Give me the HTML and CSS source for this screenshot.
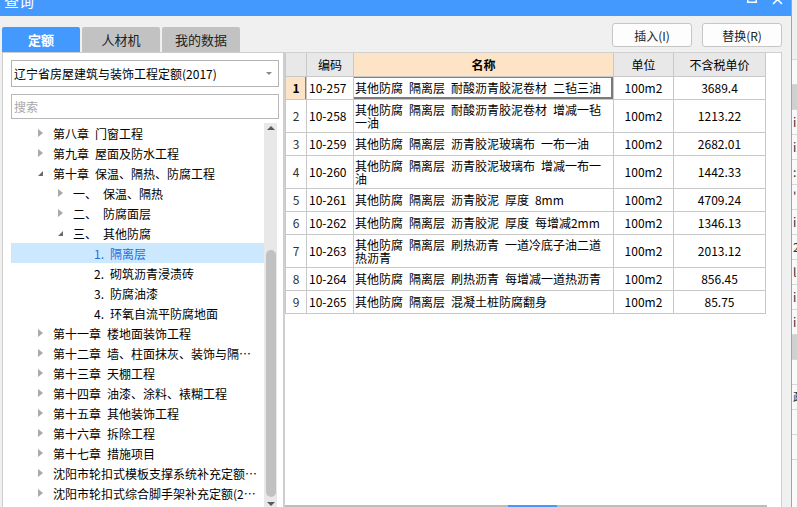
FILE: index.html
```html
<!DOCTYPE html>
<html lang="zh-CN">
<head>
<meta charset="utf-8">
<title>查询</title>
<link rel="stylesheet" href="styles.css">
</head>
<body>
<div class="app">
  <div class="dialog">
    <div class="titlebar">
      <span class="title">查询</span>
      <div class="winctl">
        <svg class="ico-restore" width="10" height="10" viewBox="0 0 10 10"><rect x="0.75" y="0.75" width="8.5" height="8.5" fill="none" stroke="#fff" stroke-width="1.5"/></svg>
        <svg class="ico-close" width="11" height="11" viewBox="0 0 11 11"><path d="M1 1 L10 10 M10 1 L1 10" stroke="#fff" stroke-width="1.6" fill="none"/></svg>
      </div>
    </div>
    <div class="toolbar">
      <div class="tabs">
        <div class="tab active">定额</div>
        <div class="tab">人材机</div>
        <div class="tab">我的数据</div>
      </div>
      <div class="buttons">
        <button class="btn">插入(I)</button>
        <button class="btn">替换(R)</button>
      </div>
    </div>
    <div class="main">
      <div class="lpanel">
        <div class="combo"><span class="combo-text">辽宁省房屋建筑与装饰工程定额(2017)</span><span class="caret"></span></div>
        <div class="search">搜索</div>
        <div class="treewrap">
          <ul class="tree">
            <li class="l1"><span class="arw closed"></span><span class="lbl">第八章 门窗工程</span></li>
            <li class="l1"><span class="arw closed"></span><span class="lbl">第九章 屋面及防水工程</span></li>
            <li class="l1"><span class="arw open"></span><span class="lbl">第十章 保温、隔热、防腐工程</span></li>
            <li class="l2"><span class="arw closed"></span><span class="lbl">一、 保温、隔热</span></li>
            <li class="l2"><span class="arw closed"></span><span class="lbl">二、 防腐面层</span></li>
            <li class="l2"><span class="arw open"></span><span class="lbl">三、 其他防腐</span></li>
            <li class="l3 sel"><span class="arw"></span><span class="lbl">1. 隔离层</span></li>
            <li class="l3"><span class="arw"></span><span class="lbl">2. 砌筑沥青浸渍砖</span></li>
            <li class="l3"><span class="arw"></span><span class="lbl">3. 防腐油漆</span></li>
            <li class="l3"><span class="arw"></span><span class="lbl">4. 环氧自流平防腐地面</span></li>
            <li class="l1"><span class="arw closed"></span><span class="lbl">第十一章 楼地面装饰工程</span></li>
            <li class="l1"><span class="arw closed"></span><span class="lbl">第十二章 墙、柱面抹灰、装饰与隔断工程</span></li>
            <li class="l1"><span class="arw closed"></span><span class="lbl">第十三章 天棚工程</span></li>
            <li class="l1"><span class="arw closed"></span><span class="lbl">第十四章 油漆、涂料、裱糊工程</span></li>
            <li class="l1"><span class="arw closed"></span><span class="lbl">第十五章 其他装饰工程</span></li>
            <li class="l1"><span class="arw closed"></span><span class="lbl">第十六章 拆除工程</span></li>
            <li class="l1"><span class="arw closed"></span><span class="lbl">第十七章 措施项目</span></li>
            <li class="l1"><span class="arw closed"></span><span class="lbl">沈阳市轮扣式模板支撑系统补充定额(2017)</span></li>
            <li class="l1"><span class="arw closed"></span><span class="lbl">沈阳市轮扣式综合脚手架补充定额(2017)</span></li>
          </ul>
          <div class="vscroll">
            <span class="sb-up"></span>
            <div class="sb-gap"></div>
            <div class="sb-thumb"></div>
            <span class="sb-down"></span>
          </div>
        </div>
      </div>
      <div class="rpanel">
        <table class="grid">
          <colgroup>
            <col class="c-no"><col class="c-code"><col class="c-name"><col class="c-unit"><col class="c-price">
          </colgroup>
          <thead>
            <tr><th></th><th>编码</th><th class="hl">名称</th><th>单位</th><th>不含税单价</th></tr>
          </thead>
          <tbody>
            <tr><td class="no cur">1</td><td class="code">10-257</td><td class="name focus">其他防腐 隔离层 耐酸沥青胶泥卷材 二毡三油</td><td class="unit">100m2</td><td class="price">3689.4</td></tr>
            <tr class="tall"><td class="no">2</td><td class="code">10-258</td><td class="name">其他防腐 隔离层 耐酸沥青胶泥卷材 增减一毡一油</td><td class="unit">100m2</td><td class="price">1213.22</td></tr>
            <tr><td class="no">3</td><td class="code">10-259</td><td class="name">其他防腐 隔离层 沥青胶泥玻璃布 一布一油</td><td class="unit">100m2</td><td class="price">2682.01</td></tr>
            <tr class="tall"><td class="no">4</td><td class="code">10-260</td><td class="name">其他防腐 隔离层 沥青胶泥玻璃布 增减一布一油</td><td class="unit">100m2</td><td class="price">1442.33</td></tr>
            <tr><td class="no">5</td><td class="code">10-261</td><td class="name">其他防腐 隔离层 沥青胶泥 厚度 8mm</td><td class="unit">100m2</td><td class="price">4709.24</td></tr>
            <tr><td class="no">6</td><td class="code">10-262</td><td class="name">其他防腐 隔离层 沥青胶泥 厚度 每增减2mm</td><td class="unit">100m2</td><td class="price">1346.13</td></tr>
            <tr class="tall"><td class="no">7</td><td class="code">10-263</td><td class="name">其他防腐 隔离层 刷热沥青 一道冷底子油二道热沥青</td><td class="unit">100m2</td><td class="price">2013.12</td></tr>
            <tr><td class="no">8</td><td class="code">10-264</td><td class="name">其他防腐 隔离层 刷热沥青 每增减一道热沥青</td><td class="unit">100m2</td><td class="price">856.45</td></tr>
            <tr><td class="no">9</td><td class="code">10-265</td><td class="name">其他防腐 隔离层 混凝土桩防腐翻身</td><td class="unit">100m2</td><td class="price">85.75</td></tr>
          </tbody>
        </table>
        <div class="spacer"></div>
        <div class="hbar"><div class="hthumb"></div></div>
      </div>
    </div>
  </div>
  <div class="bgapp">
    <div class="bg-top"></div>
    <div class="bg-row"></div>
    <div class="bg-row dark"></div>
    <div class="bg-row"><span>i.</span></div>
    <div class="bg-row"><span>i.</span></div>
    <div class="bg-row"><span>:.</span></div>
    <div class="bg-row"><span>'.</span></div>
    <div class="bg-row"><span>i.</span></div>
    <div class="bg-row"><span>2!</span></div>
    <div class="bg-row"><span>l.</span></div>
    <div class="bg-row"><span>i.</span></div>
    <div class="bg-row"><span>i.</span></div>
    <div class="bg-row dark"></div>
    <div class="bg-row"></div>
    <div class="bg-row"><span>疏</span></div>
    <div class="bg-row"></div>
    <div class="bg-row"></div>
  </div>
</div>
</body>
</html>
```

FILE: styles.css
```css
* { box-sizing: border-box; }

html, body {
  margin: 0;
  padding: 0;
}

body {
  width: 797px;
  height: 507px;
  overflow: hidden;
  background: #f0f0f0;
  font-family: "Noto Sans CJK SC", "Noto Sans", sans-serif;
  font-size: 12px;
  word-spacing: 3.3px;
  color: #000;
}

.app {
  display: flex;
  width: 797px;
  height: 507px;
}

.dialog {
  width: 791px;
  height: 507px;
  display: flex;
  flex-direction: column;
  background: #f0f0f0;
}

/* title bar */
.titlebar {
  height: 16px;
  flex: none;
  background: #4499fe;
  display: flex;
  overflow: hidden;
}

.title {
  color: #fff;
  font-size: 15px;
  line-height: 16px;
  margin-top: -7px;
  margin-left: 4px;
  word-spacing: 0;
}

.winctl {
  margin-left: auto;
  margin-right: 8px;
  display: flex;
  gap: 15px;
}

.ico-restore { margin-top: -7px; }
.ico-close { margin-top: -6px; }

/* toolbar: tabs + buttons */
.toolbar {
  height: 36px;
  flex: none;
  display: flex;
  padding-left: 2px;
}

.tabs {
  display: flex;
  gap: 2px;
  align-self: flex-end;
}

.tab {
  width: 78px;
  height: 25px;
  line-height: 25px;
  text-align: center;
  background: #c2c2c2;
  color: #222;
  font-size: 13px;
  border-radius: 2px 2px 0 0;
}

.tab.active {
  background: #4499fe;
  color: #fff;
  font-weight: bold;
}

.buttons {
  margin-left: auto;
  margin-right: 9px;
  margin-top: 7px;
  display: flex;
  gap: 10px;
  align-self: flex-start;
}

.btn {
  width: 80px;
  height: 24px;
  padding: 0;
  font: inherit;
  font-size: 12px;
  word-spacing: 0;
  color: #222;
  background: #fdfdfd;
  border: 1px solid #c6c6c6;
  border-radius: 3px;
}

/* main area */
.main {
  flex: 1;
  display: flex;
  padding-left: 2px;
  min-height: 0;
}

.lpanel {
  width: 282px;
  background: #fff;
  border: 1px solid #cdcdcd;
  border-bottom: none;
  padding: 7px 0 0 8px;
  display: flex;
  flex-direction: column;
}

.combo {
  width: 268px;
  height: 27px;
  border: 1px solid #b4b4b4;
  display: flex;
  align-items: center;
  padding-left: 2px;
  padding-right: 6px;
  word-spacing: 0;
}

.combo-text { flex: 1; }

.caret {
  width: 0;
  height: 0;
  border-left: 3px solid transparent;
  border-right: 3px solid transparent;
  border-top: 3px solid #8a8a8a;
}

.search {
  width: 268px;
  height: 25px;
  margin-top: 7px;
  border: 1px solid #b8b8b8;
  color: #a8a8a8;
  line-height: 23px;
  padding-left: 2px;
}

.treewrap {
  margin-top: 4px;
  display: flex;
  flex: 1;
  min-height: 0;
  width: 266px;
}

.tree {
  list-style: none;
  margin: 0;
  padding: 0;
  width: 253px;
}

.tree li {
  height: 20px;
  display: flex;
  align-items: center;
  white-space: nowrap;
  padding-right: 6px;
}

.tree li.l1 { padding-left: 27px; }
.tree li.l2 { padding-left: 47px; }
.tree li.l3 { padding-left: 68px; }

.tree li.sel {
  background: #cce8ff;
  color: #1f6fdb;
}

.arw {
  width: 15px;
  flex: none;
  height: 8px;
  position: relative;
}

.arw.closed::before {
  content: "";
  position: absolute;
  left: 0;
  top: 0;
  border-left: 5px solid #a9a9a9;
  border-top: 4px solid transparent;
  border-bottom: 4px solid transparent;
}

.arw.open::before {
  content: "";
  position: absolute;
  left: 0;
  top: 2px;
  border-right: 5px solid #6b6b6b;
  border-top: 5px solid transparent;
}

.lbl {
  flex: 1;
  min-width: 0;
  overflow: hidden;
  text-overflow: ellipsis;
}

.vscroll {
  width: 13px;
  background: #e8e8e8;
  display: flex;
  flex-direction: column;
  align-items: center;
}

.sb-up {
  margin-top: 3px;
  width: 0;
  height: 0;
  border-left: 4px solid transparent;
  border-right: 4px solid transparent;
  border-bottom: 4px solid #5a5a5a;
  flex: none;
}

.sb-gap { height: 120px; flex: none; }

.sb-thumb {
  width: 10px;
  height: 247px;
  background: #c1c1c1;
  border-radius: 5px;
  flex: none;
}

.sb-down {
  margin-top: 5px;
  width: 0;
  height: 0;
  border-left: 4px solid transparent;
  border-right: 4px solid transparent;
  border-top: 4px solid #5a5a5a;
  flex: none;
}

/* right panel with grid */
.rpanel {
  width: 498px;
  background: #fff;
  border: 1px solid #d0d0d0;
  border-bottom: none;
  display: flex;
  flex-direction: column;
}

.grid {
  border-collapse: collapse;
  table-layout: fixed;
  width: 480px;
}

.c-no { width: 21px; }
.c-code { width: 47px; }
.c-name { width: 260px; }
.c-unit { width: 60px; }
.c-price { width: 92px; }

.grid th,
.grid td {
  border: 1px solid #c8c8c8;
  padding: 0;
  line-height: 13px;
  vertical-align: middle;
  font-weight: normal;
}

.grid thead tr { height: 23px; }
.grid thead th {
  background: #e8e8e8;
  text-align: center;
  border-top: none;
}
.grid thead th.hl {
  background: #fde4c6;
  font-weight: bold;
}

.grid tbody tr { height: 23px; }
.grid tbody tr.tall { height: 33px; }

.grid td.no {
  text-align: center;
  color: #333;
}
.grid td.no.cur {
  background: #fde4c6;
  font-weight: bold;
  color: #000;
  box-shadow: inset -1px 0 0 #3c8df2;
}

.grid td.code { padding-left: 2px; }
.grid td.name { padding-left: 1px; padding-right: 10px; }
.grid td.name.focus {
  box-shadow: inset 0 1px 0 #3c8df2, inset -2px -2px 0 #7a7a7a;
}
.grid td.unit,
.grid td.price { text-align: center; }

.spacer { flex: 1; }

.hbar {
  height: 2px;
  display: flex;
  background: #bdbdbd;
  margin-right: 14px;
}
.hthumb {
  width: 49px;
  margin-left: 223px;
  background: #4499fe;
}

/* strip of background application at the right edge */
.bgapp {
  width: 6px;
  height: 507px;
  border-left: 1px solid #a4a4a4;
  background: #fafafa;
  overflow: hidden;
  display: flex;
  flex-direction: column;
  font-size: 12px;
  word-spacing: 0;
}
.bg-top {
  height: 60px;
  flex: none;
  background: #f0f0f0;
  border-bottom: 1px solid #d8d8d8;
}
.bg-row {
  height: 25px;
  flex: none;
  border-bottom: 1px solid #d8d8d8;
  line-height: 24px;
  color: #333;
  padding-left: 1px;
}
.bg-row.dark { background: #d0d0d0; }
```
